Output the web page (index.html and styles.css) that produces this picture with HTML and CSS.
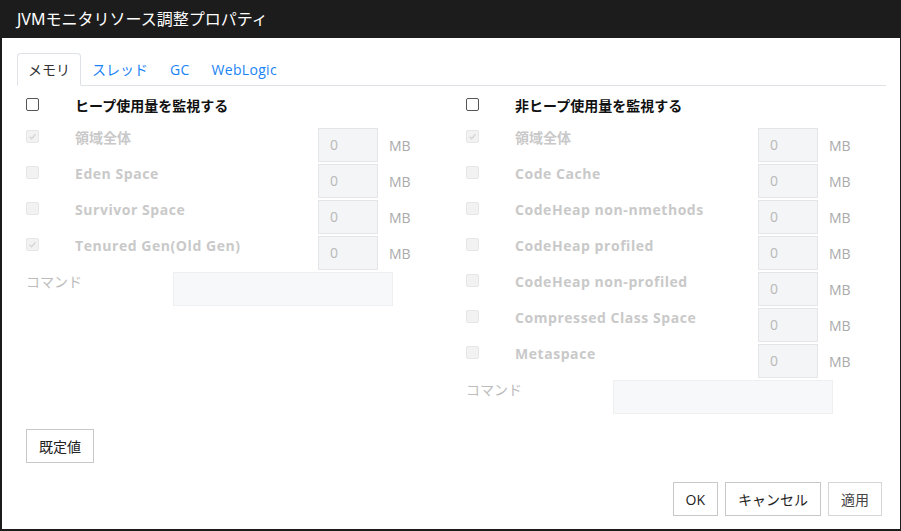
FILE: index.html
```html
<!DOCTYPE html>
<html lang="ja">
<head>
<meta charset="utf-8">
<link rel="stylesheet" href="styles.css">
</head>
<body>
<div class="dialog">
  <div class="titlebar">JVMモニタリソース調整プロパティ</div>
  <div class="content">
    <div class="tabs">
      <div class="tab active">メモリ</div>
      <div class="tab">スレッド</div>
      <div class="tab en">GC</div>
      <div class="tab en">WebLogic</div>
    </div>
    <div class="cols">
      <div class="col">
        <div class="hrow"><span class="cb"></span><span class="hlabel">ヒープ使用量を監視する</span></div>
        <div class="row"><span class="cb dis checked"><svg viewBox="0 0 13 13"><path d="M3 6.8 L5.5 9.2 L10 3.8" fill="none" stroke="#d6d6d6" stroke-width="1.6"/></svg></span><span class="lbl">領域全体</span><span class="inp">0</span><span class="unit">MB</span></div>
        <div class="row"><span class="cb dis"></span><span class="lbl en">Eden Space</span><span class="inp">0</span><span class="unit">MB</span></div>
        <div class="row"><span class="cb dis"></span><span class="lbl en">Survivor Space</span><span class="inp">0</span><span class="unit">MB</span></div>
        <div class="row"><span class="cb dis checked"><svg viewBox="0 0 13 13"><path d="M3 6.8 L5.5 9.2 L10 3.8" fill="none" stroke="#d6d6d6" stroke-width="1.6"/></svg></span><span class="lbl en">Tenured Gen(Old Gen)</span><span class="inp">0</span><span class="unit">MB</span></div>
        <div class="crow"><span class="clabel">コマンド</span><span class="cinp"></span></div>
      </div>
      <div class="col">
        <div class="hrow"><span class="cb"></span><span class="hlabel">非ヒープ使用量を監視する</span></div>
        <div class="row"><span class="cb dis checked"><svg viewBox="0 0 13 13"><path d="M3 6.8 L5.5 9.2 L10 3.8" fill="none" stroke="#d6d6d6" stroke-width="1.6"/></svg></span><span class="lbl">領域全体</span><span class="inp">0</span><span class="unit">MB</span></div>
        <div class="row"><span class="cb dis"></span><span class="lbl en">Code Cache</span><span class="inp">0</span><span class="unit">MB</span></div>
        <div class="row"><span class="cb dis"></span><span class="lbl en">CodeHeap non-nmethods</span><span class="inp">0</span><span class="unit">MB</span></div>
        <div class="row"><span class="cb dis"></span><span class="lbl en">CodeHeap profiled</span><span class="inp">0</span><span class="unit">MB</span></div>
        <div class="row"><span class="cb dis"></span><span class="lbl en">CodeHeap non-profiled</span><span class="inp">0</span><span class="unit">MB</span></div>
        <div class="row"><span class="cb dis"></span><span class="lbl en">Compressed Class Space</span><span class="inp">0</span><span class="unit">MB</span></div>
        <div class="row"><span class="cb dis"></span><span class="lbl en">Metaspace</span><span class="inp">0</span><span class="unit">MB</span></div>
        <div class="crow"><span class="clabel">コマンド</span><span class="cinp"></span></div>
      </div>
    </div>
    <div class="defrow"><button class="btn">既定値</button></div>
    <div class="footer">
      <button class="btn">OK</button>
      <button class="btn">キャンセル</button>
      <button class="btn apply">適用</button>
    </div>
  </div>
</div>
</body>
</html>
```
FILE: styles.css
```css
* { box-sizing: border-box; }
html, body { margin: 0; padding: 0; background: #1c1c1c; }
body { font-family: "Open Sans", "Noto Sans CJK JP", sans-serif; font-size: 14px; color: #222; }
.dialog {
  width: 901px; height: 531px;
  background: #fff;
  border-left: 2px solid #1c1c1c;
  border-right: 1px solid #1c1c1c;
  border-bottom: 2px solid #1c1c1c;
  display: flex; flex-direction: column;
}
.titlebar {
  height: 38px; background: #1c1c1c; color: #fff;
  font-family: "Noto Sans", "Noto Sans CJK JP", sans-serif;
  font-size: 16px; line-height: 38px;
  margin-left: -2px; margin-right: -1px; padding-left: 17px;
}
.content { padding: 15px 14px 0 15px; flex: 1; display: flex; flex-direction: column; }
.tabs { display: flex; height: 33px; border-bottom: 1px solid #dee2e6; }
.tab {
  height: 33px; line-height: 31px; padding: 0 10px;
  border: 1px solid transparent; border-radius: 4px 4px 0 0;
  color: #1a84f5; margin-bottom: -1px;
}
.tab.en { letter-spacing: 0.3px; }
.tab.active { border-color: #dee2e6 #dee2e6 #fff; color: #333; background: #fff; }
.cols { display: grid; grid-template-columns: 440px 1fr; margin-top: 10px; }
.hrow { display: grid; grid-template-columns: 58px auto; height: 20px; margin-bottom: 12px; }
.cb {
  display: block; width: 13px; height: 13px; margin: 2px 0 0 9px;
  border: 1px solid #555; border-radius: 2px; background: #fff;
}
.cb svg { display: block; width: 11px; height: 11px; }
.cb.dis { border-color: #e6e6e6; background: #f2f2f2; }
.hlabel { font-weight: bold; line-height: 20px; color: #111; }
.row {
  display: grid; grid-template-columns: 58px 243px 60px auto;
  height: 34px; margin-bottom: 2px;
}
.lbl { font-weight: bold; color: #c9c9c9; line-height: 19px; white-space: nowrap; }
.lbl.en { letter-spacing: 0.55px; }
.inp {
  height: 34px; border: 1px solid #e3e5e8; background: #f4f5f7;
  color: #b9b9b9; padding-left: 11px; line-height: 32px;
}
.unit { color: #aaa; margin-left: 11px; align-self: center; padding-top: 1px; }
.crow { display: grid; grid-template-columns: 156px 220px; height: 34px; }
.clabel { color: #bdbdbd; line-height: 19px; padding-left: 9px; }
.cinp { height: 34px; border: 1px solid #eeeff1; background: #f7f8fa; }
.defrow { margin-top: 15px; padding-left: 9px; }
.btn {
  font-family: inherit; font-size: 14px; color: #222;
  height: 34px; padding: 0 12px; background: #fff;
  border: 1px solid #c8c8c8; border-radius: 0;
}
.footer { display: flex; justify-content: flex-end; gap: 7px; margin-top: 19px; margin-right: 4px; }
.apply { border-color: #d6d6d6; color: #444; }
```
